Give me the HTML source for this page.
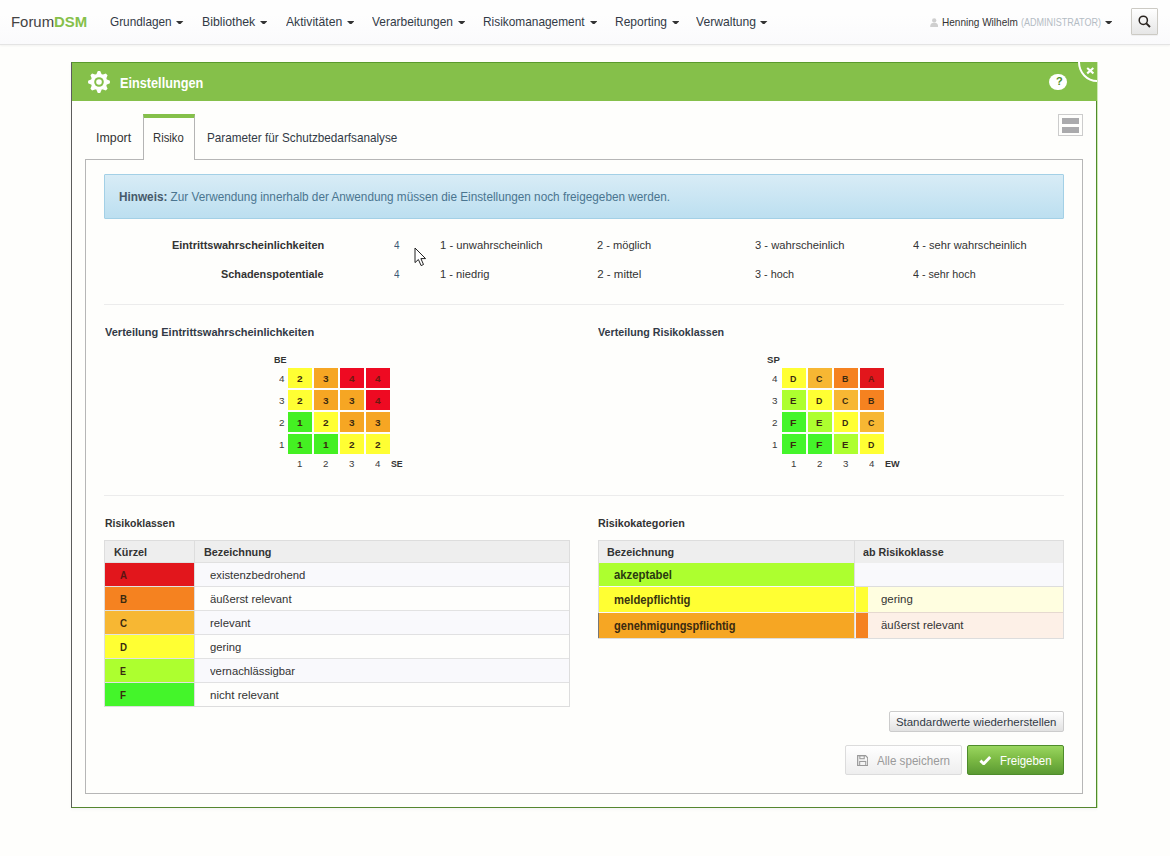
<!DOCTYPE html>
<html lang="de">
<head>
<meta charset="utf-8">
<title>ForumDSM - Einstellungen</title>
<style>
html,body{margin:0;padding:0;}
body{width:1170px;height:856px;overflow:hidden;background:#fefefc;font-family:'Liberation Sans',sans-serif;position:relative;}
#page{position:absolute;left:0;top:0;width:1170px;height:856px;overflow:hidden;background:#fefefc;}
.a{position:absolute;box-sizing:border-box;}
.t{position:absolute;white-space:nowrap;line-height:1;transform-origin:0 50%;font-family:'Liberation Sans',sans-serif;}
.c{position:absolute;}
.caret{position:absolute;width:0;height:0;border-left:3.8px solid transparent;border-right:3.8px solid transparent;border-top:4.2px solid #333;}
</style>
</head>
<body>
<div id="page">

<!-- NAVBAR -->
<div class="a" style="left:0;top:0;width:1170px;height:45px;background:linear-gradient(#fefefe 0%,#fefefe 33%,#fafafc 100%);border-bottom:1px solid #e4e4e4;box-shadow:0 1px 2px rgba(0,0,0,.05);"></div>
<svg class="a" style="left:176.4px;top:20.7px" width="7.4" height="3.8" viewBox="0 0 7.4 3.8"><path d="M0 0 H7.4 L3.7 3.8 Z" fill="#333"/></svg>
<svg class="a" style="left:260.0px;top:20.7px" width="7.4" height="3.8" viewBox="0 0 7.4 3.8"><path d="M0 0 H7.4 L3.7 3.8 Z" fill="#333"/></svg>
<svg class="a" style="left:346.6px;top:20.7px" width="7.4" height="3.8" viewBox="0 0 7.4 3.8"><path d="M0 0 H7.4 L3.7 3.8 Z" fill="#333"/></svg>
<svg class="a" style="left:457.6px;top:20.7px" width="7.4" height="3.8" viewBox="0 0 7.4 3.8"><path d="M0 0 H7.4 L3.7 3.8 Z" fill="#333"/></svg>
<svg class="a" style="left:589.6px;top:20.7px" width="7.4" height="3.8" viewBox="0 0 7.4 3.8"><path d="M0 0 H7.4 L3.7 3.8 Z" fill="#333"/></svg>
<svg class="a" style="left:671.6px;top:20.7px" width="7.4" height="3.8" viewBox="0 0 7.4 3.8"><path d="M0 0 H7.4 L3.7 3.8 Z" fill="#333"/></svg>
<svg class="a" style="left:760.4px;top:20.7px" width="7.4" height="3.8" viewBox="0 0 7.4 3.8"><path d="M0 0 H7.4 L3.7 3.8 Z" fill="#333"/></svg>
<svg class="a" style="left:1105.0px;top:20.7px" width="7.4" height="3.8" viewBox="0 0 7.4 3.8"><path d="M0 0 H7.4 L3.7 3.8 Z" fill="#333"/></svg>
<!-- user icon -->
<svg class="a" style="left:930px;top:18.3px" width="8.4" height="9" viewBox="0 0 14 15"><circle cx="7" cy="4" r="3.6" fill="#cfcfcf"/><path d="M0.3 15 C0.3 9.5 3 8 7 8 C11 8 13.7 9.5 13.7 15 Z" fill="#cfcfcf"/></svg>
<!-- search button -->
<div class="a" style="left:1131px;top:8px;width:27px;height:27px;border:1px solid #cccac4;border-radius:1px;background:linear-gradient(#ffffff,#e6e6e6);box-shadow:0 1px 1px rgba(0,0,0,.05);"></div>
<svg class="a" style="left:1138px;top:14.5px" width="13" height="13" viewBox="0 0 13 13"><circle cx="5.3" cy="5.3" r="4.1" fill="none" stroke="#2a2420" stroke-width="1.5"/><path d="M8.3 8.3 L12 12" stroke="#2a2420" stroke-width="1.9"/></svg>

<!-- PANEL -->
<div class="a" style="left:71px;top:62px;width:1026px;height:746px;border-top:1px solid #5a9a2c;border-left:1px solid #5c5c5c;border-right:1px solid #4f8a2b;border-bottom:1px solid #55862f;box-shadow:1px 0 0 rgba(150,215,90,.45),0 2px 2px rgba(120,120,160,.06);background:#fefefc;"></div>
<div class="a" style="left:71px;top:62px;width:1026px;height:38.5px;background:#85c04a;border-top:1px solid #5a9a2c;border-left:1px solid #5c5c5c;"></div>
<!-- gear -->
<svg class="a" style="left:88.4px;top:70.6px" width="22" height="22" viewBox="-11 -11 22 22">
<g fill="#fff">
<circle r="8.2"/>
<path d="M-2.7 -7.4 L-1.2 -10.9 L1.2 -10.9 L2.7 -7.4 Z" transform="rotate(0)"/>
<path d="M-2.7 -7.4 L-1.2 -10.9 L1.2 -10.9 L2.7 -7.4 Z" transform="rotate(45)"/>
<path d="M-2.7 -7.4 L-1.2 -10.9 L1.2 -10.9 L2.7 -7.4 Z" transform="rotate(90)"/>
<path d="M-2.7 -7.4 L-1.2 -10.9 L1.2 -10.9 L2.7 -7.4 Z" transform="rotate(135)"/>
<path d="M-2.7 -7.4 L-1.2 -10.9 L1.2 -10.9 L2.7 -7.4 Z" transform="rotate(180)"/>
<path d="M-2.7 -7.4 L-1.2 -10.9 L1.2 -10.9 L2.7 -7.4 Z" transform="rotate(225)"/>
<path d="M-2.7 -7.4 L-1.2 -10.9 L1.2 -10.9 L2.7 -7.4 Z" transform="rotate(270)"/>
<path d="M-2.7 -7.4 L-1.2 -10.9 L1.2 -10.9 L2.7 -7.4 Z" transform="rotate(315)"/>
</g>
<circle r="4.8" fill="#85c04a"/><circle r="2.8" fill="#fff"/>
</svg>
<!-- help -->
<div class="a" style="left:1049.3px;top:73.8px;width:17.8px;height:16.6px;border-radius:50%;background:#fff;"></div>
<span class="t" style="left:1055.9px;top:76px;font-size:11px;font-weight:700;color:#4f8f2a;">?</span>
<!-- close -->
<div class="a" style="left:1078px;top:42px;width:38px;height:40px;border-radius:50%;border:2.3px solid #fff;background:#85c04a;clip-path:inset(20px 19px 0 0);"></div>
<svg class="a" style="left:1085.6px;top:67.2px" width="8.6" height="7.4" viewBox="0 0 8.6 7.4"><path d="M1.2 1 L7.4 6.4 M7.4 1 L1.2 6.4" stroke="#fff" stroke-width="2.1" fill="none"/></svg>
<!-- page bg right of panel to hide -->

<!-- TABS -->
<div class="a" style="left:85.2px;top:158.6px;width:997.8px;height:635.4px;border:1px solid #b6b6b6;background:#fefefc;"></div>
<div class="a" style="left:143px;top:114px;width:52px;height:46px;border:1px solid #b4b4b4;border-bottom:none;border-top:4.8px solid #85c04a;background:#fefefc;"></div>
<!-- toggle button -->
<div class="a" style="left:1058px;top:113.8px;width:25px;height:22px;border:1px solid #ccc;background:#fefefc;"></div>
<div class="a" style="left:1062px;top:118px;width:17px;height:6.4px;background:#aaaaac;"></div>
<div class="a" style="left:1062px;top:126.6px;width:17px;height:6.4px;background:#aaaaac;"></div>

<!-- ALERT -->
<div class="a" style="left:104px;top:174.4px;width:960px;height:44.4px;border:1px solid #a3d0e6;border-radius:1px;background:linear-gradient(#d8ecf6,#bcdff0);"></div>

<!-- HR -->
<div class="a" style="left:104px;top:304.2px;width:960px;height:1px;background:#ececec;"></div>
<div class="a" style="left:104px;top:495px;width:960px;height:1px;background:#ececec;"></div>

<div class="c" style="left:287.9px;top:368.1px;width:24.2px;height:19.8px;background:#ffff33"></div><div class="c" style="left:313.9px;top:368.1px;width:24.2px;height:19.8px;background:#f6a623"></div><div class="c" style="left:339.9px;top:368.1px;width:24.2px;height:19.8px;background:#ee0a22"></div><div class="c" style="left:365.9px;top:368.1px;width:24.2px;height:19.8px;background:#ee0a22"></div><div class="c" style="left:287.9px;top:390.1px;width:24.2px;height:19.8px;background:#ffff33"></div><div class="c" style="left:313.9px;top:390.1px;width:24.2px;height:19.8px;background:#f6a623"></div><div class="c" style="left:339.9px;top:390.1px;width:24.2px;height:19.8px;background:#f6a623"></div><div class="c" style="left:365.9px;top:390.1px;width:24.2px;height:19.8px;background:#ee0a22"></div><div class="c" style="left:287.9px;top:412.1px;width:24.2px;height:19.8px;background:#44f022"></div><div class="c" style="left:313.9px;top:412.1px;width:24.2px;height:19.8px;background:#ffff33"></div><div class="c" style="left:339.9px;top:412.1px;width:24.2px;height:19.8px;background:#f6a623"></div><div class="c" style="left:365.9px;top:412.1px;width:24.2px;height:19.8px;background:#f6a623"></div><div class="c" style="left:287.9px;top:434.1px;width:24.2px;height:19.8px;background:#44f022"></div><div class="c" style="left:313.9px;top:434.1px;width:24.2px;height:19.8px;background:#44f022"></div><div class="c" style="left:339.9px;top:434.1px;width:24.2px;height:19.8px;background:#ffff33"></div><div class="c" style="left:365.9px;top:434.1px;width:24.2px;height:19.8px;background:#ffff33"></div><div class="c" style="left:781.5px;top:368.1px;width:24.6px;height:19.8px;background:#ffff33"></div><div class="c" style="left:807.5px;top:368.1px;width:24.6px;height:19.8px;background:#f7b733"></div><div class="c" style="left:833.5px;top:368.1px;width:24.6px;height:19.8px;background:#f58220"></div><div class="c" style="left:859.5px;top:368.1px;width:24.6px;height:19.8px;background:#e2161c"></div><div class="c" style="left:781.5px;top:390.1px;width:24.6px;height:19.8px;background:#adff2f"></div><div class="c" style="left:807.5px;top:390.1px;width:24.6px;height:19.8px;background:#ffff33"></div><div class="c" style="left:833.5px;top:390.1px;width:24.6px;height:19.8px;background:#f7b733"></div><div class="c" style="left:859.5px;top:390.1px;width:24.6px;height:19.8px;background:#f58220"></div><div class="c" style="left:781.5px;top:412.1px;width:24.6px;height:19.8px;background:#44f52a"></div><div class="c" style="left:807.5px;top:412.1px;width:24.6px;height:19.8px;background:#adff2f"></div><div class="c" style="left:833.5px;top:412.1px;width:24.6px;height:19.8px;background:#ffff33"></div><div class="c" style="left:859.5px;top:412.1px;width:24.6px;height:19.8px;background:#f7b733"></div><div class="c" style="left:781.5px;top:434.1px;width:24.6px;height:19.8px;background:#44f52a"></div><div class="c" style="left:807.5px;top:434.1px;width:24.6px;height:19.8px;background:#44f52a"></div><div class="c" style="left:833.5px;top:434.1px;width:24.6px;height:19.8px;background:#adff2f"></div><div class="c" style="left:859.5px;top:434.1px;width:24.6px;height:19.8px;background:#ffff33"></div>

<!-- TABLE 1 -->
<div class="a" style="left:104.4px;top:540.2px;width:466px;height:167px;border:1px solid #ddd;background:#fefefc;"></div>
<div class="a" style="left:105.4px;top:541.2px;width:464px;height:21.4px;background:#eeeeee;"></div>
<div class="a" style="left:194.4px;top:562.8px;width:374.8px;height:23.8px;background:#f9f9fc;"></div>
<div class="a" style="left:105.4px;top:563.0px;width:88.6px;height:23.3px;background:#e2161c;"></div>
<div class="a" style="left:105.4px;top:562.0px;width:464px;height:1px;background:rgba(221,221,221,.85);"></div>
<div class="a" style="left:105.4px;top:587.0px;width:88.6px;height:23.3px;background:#f58220;"></div>
<div class="a" style="left:105.4px;top:586.0px;width:464px;height:1px;background:rgba(221,221,221,.85);"></div>
<div class="a" style="left:194.4px;top:610.8px;width:374.8px;height:23.8px;background:#f9f9fc;"></div>
<div class="a" style="left:105.4px;top:611.0px;width:88.6px;height:23.3px;background:#f7b733;"></div>
<div class="a" style="left:105.4px;top:610.0px;width:464px;height:1px;background:rgba(221,221,221,.85);"></div>
<div class="a" style="left:105.4px;top:635.0px;width:88.6px;height:23.3px;background:#ffff33;"></div>
<div class="a" style="left:105.4px;top:634.0px;width:464px;height:1px;background:rgba(221,221,221,.85);"></div>
<div class="a" style="left:194.4px;top:658.8px;width:374.8px;height:23.8px;background:#f9f9fc;"></div>
<div class="a" style="left:105.4px;top:659.0px;width:88.6px;height:23.3px;background:#adff2f;"></div>
<div class="a" style="left:105.4px;top:658.0px;width:464px;height:1px;background:rgba(221,221,221,.85);"></div>
<div class="a" style="left:105.4px;top:683.0px;width:88.6px;height:23.3px;background:#44f52a;"></div>
<div class="a" style="left:105.4px;top:682.0px;width:464px;height:1px;background:rgba(221,221,221,.85);"></div>
<div class="a" style="left:193.8px;top:541.2px;width:1px;height:165.4px;background:#ddd;"></div>

<!-- TABLE 2 -->
<div class="a" style="left:598px;top:540.2px;width:466px;height:98.4px;border:1px solid #ddd;background:#f9f9fc;"></div>
<div class="a" style="left:599px;top:541.2px;width:464px;height:21.4px;background:#eeeeee;"></div>
<div class="a" style="left:854.3px;top:541.2px;width:1px;height:96.6px;background:#ddd;"></div>
<div class="a" style="left:599px;top:563.2px;width:255.3px;height:23.2px;background:#adff2f;"></div>
<div class="a" style="left:599px;top:587.4px;width:255.3px;height:24.8px;background:#ffff33;"></div>
<div class="a" style="left:599px;top:613.2px;width:255.3px;height:24.6px;background:#f6a623;"></div>
<div class="a" style="left:855.3px;top:586.2px;width:207.8px;height:1px;background:#ddd;"></div>
<div class="a" style="left:855.3px;top:612.3px;width:207.8px;height:1px;background:#e6d9d0;"></div>
<div class="a" style="left:855.3px;top:587.2px;width:207.8px;height:25.1px;background:#fffee0;"></div>
<div class="a" style="left:855.3px;top:613.3px;width:207.8px;height:24.5px;background:#fdf0e7;"></div>
<div class="a" style="left:856px;top:587.2px;width:12px;height:25.1px;background:#ffff33;"></div>
<div class="a" style="left:856px;top:613.3px;width:12px;height:24.5px;background:#f58220;"></div>

<div class="a" style="left:598px;top:613px;width:1px;height:25px;background:#777;"></div>

<!-- BUTTONS -->
<div class="a" style="left:889px;top:711.2px;width:175px;height:20.6px;border:1px solid #ccc;border-radius:2px;background:linear-gradient(#ffffff,#e2e2e2);"></div>
<div class="a" style="left:845px;top:745.4px;width:116.8px;height:29.4px;border:1px solid #dcdcdc;border-radius:2px;background:linear-gradient(#ffffff,#eeeeee);"></div>
<div class="a" style="left:967px;top:745.4px;width:97px;height:29.4px;border:1px solid #4e8c2b;border-radius:2px;background:linear-gradient(#9ad65f 0%,#7dbb45 45%,#5b9a33 100%);"></div>
<!-- floppy -->
<svg class="a" style="left:856.6px;top:754.8px" width="11.4" height="11.4" viewBox="0 0 12 12"><path d="M0.7 0.7 H9 L11.3 3 V11.3 H0.7 Z" fill="none" stroke="#9a9a9a" stroke-width="1.3"/><rect x="3" y="0.7" width="4.6" height="3.2" fill="none" stroke="#9a9a9a" stroke-width="1.1"/><rect x="2.8" y="6.8" width="6.4" height="4.4" fill="none" stroke="#9a9a9a" stroke-width="1.1"/></svg>
<!-- check -->
<svg class="a" style="left:979px;top:754.8px" width="12.6" height="10.6" viewBox="0 0 12.6 10.6"><path d="M1.4 5.6 L4.7 8.8 L11.2 2" fill="none" stroke="#fff" stroke-width="2.9"/></svg>

<!-- mouse cursor -->
<svg class="a" style="left:413.6px;top:246.8px" width="14" height="20" viewBox="0 0 14 20"><path d="M1 1 L1 15.6 L4.4 12.5 L7.1 18.6 L9.5 17.5 L6.9 11.6 L11.6 11.6 Z" fill="#fff" stroke="#222" stroke-width="1" stroke-linejoin="round"/></svg>

<span class="t" style="left:11.3px;top:15px;font-size:14.5px;color:#444;transform:scaleX(1.028)">Forum<b style='color:#86c04a'>DSM</b></span>
<span class="t" style="left:110.4px;top:15px;font-size:13px;color:#323a46;transform:scaleX(0.907)">Grundlagen</span>
<span class="t" style="left:202.4px;top:15px;font-size:13px;color:#323a46;transform:scaleX(0.945)">Bibliothek</span>
<span class="t" style="left:285.8px;top:15px;font-size:13px;color:#323a46;transform:scaleX(0.937)">Aktivitäten</span>
<span class="t" style="left:372.0px;top:15px;font-size:13px;color:#323a46;transform:scaleX(0.918)">Verarbeitungen</span>
<span class="t" style="left:483.0px;top:15px;font-size:13px;color:#323a46;transform:scaleX(0.913)">Risikomanagement</span>
<span class="t" style="left:614.7px;top:15px;font-size:13px;color:#323a46;transform:scaleX(0.922)">Reporting</span>
<span class="t" style="left:696.0px;top:15px;font-size:13px;color:#323a46;transform:scaleX(0.933)">Verwaltung</span>
<span class="t" style="left:942.2px;top:17px;font-size:10.5px;color:#333;transform:scaleX(0.955)">Henning Wilhelm</span>
<span class="t" style="left:1021.0px;top:17px;font-size:10.5px;color:#b4bcc4;transform:scaleX(0.861)">(ADMINISTRATOR)</span>
<span class="t" style="left:120.3px;top:76px;font-size:14px;font-weight:700;color:#fff;transform:scaleX(0.907)">Einstellungen</span>
<span class="t" style="left:95.9px;top:131px;font-size:13px;color:#333;transform:scaleX(0.953)">Import</span>
<span class="t" style="left:153.3px;top:131px;font-size:13px;color:#333;transform:scaleX(0.867)">Risiko</span>
<span class="t" style="left:207.0px;top:131px;font-size:13px;color:#323a46;transform:scaleX(0.902)">Parameter für Schutzbedarfsanalyse</span>
<span class="t" style="left:119.3px;top:191px;font-size:12px;color:#4a7590;transform:scaleX(0.980)"><b style='color:#46596a'>Hinweis:</b> Zur Verwendung innerhalb der Anwendung müssen die Einstellungen noch freigegeben werden.</span>
<span class="t" style="left:171.6px;top:240px;font-size:11.5px;font-weight:700;color:#333;transform:scaleX(0.953)">Eintrittswahrscheinlichkeiten</span>
<span class="t" style="left:221.2px;top:269px;font-size:11.5px;font-weight:700;color:#333;transform:scaleX(0.944)">Schadenspotentiale</span>
<span class="t" style="left:394.2px;top:240px;font-size:11.5px;color:#3d5875;transform:scaleX(0.859)">4</span>
<span class="t" style="left:394.2px;top:269px;font-size:11.5px;color:#3d5875;transform:scaleX(0.859)">4</span>
<span class="t" style="left:439.6px;top:240px;font-size:11.5px;color:#333;transform:scaleX(0.978)">1 - unwahrscheinlich</span>
<span class="t" style="left:597.2px;top:240px;font-size:11.5px;color:#333;transform:scaleX(0.965)">2 - möglich</span>
<span class="t" style="left:754.7px;top:240px;font-size:11.5px;color:#333;transform:scaleX(0.973)">3 - wahrscheinlich</span>
<span class="t" style="left:912.6px;top:240px;font-size:11.5px;color:#333;transform:scaleX(0.966)">4 - sehr wahrscheinlich</span>
<span class="t" style="left:439.6px;top:269px;font-size:11.5px;color:#333;transform:scaleX(0.968)">1 - niedrig</span>
<span class="t" style="left:597.2px;top:269px;font-size:11.5px;color:#333;transform:scaleX(1.000)">2 - mittel</span>
<span class="t" style="left:754.7px;top:269px;font-size:11.5px;color:#333;transform:scaleX(0.941)">3 - hoch</span>
<span class="t" style="left:912.6px;top:269px;font-size:11.5px;color:#333;transform:scaleX(0.933)">4 - sehr hoch</span>
<span class="t" style="left:104.5px;top:327px;font-size:11.5px;font-weight:700;color:#323a46;transform:scaleX(0.957)">Verteilung Eintrittswahrscheinlichkeiten</span>
<span class="t" style="left:597.8px;top:327px;font-size:11.5px;font-weight:700;color:#323a46;transform:scaleX(0.931)">Verteilung Risikoklassen</span>
<span class="t" style="left:104.7px;top:518px;font-size:11.5px;font-weight:700;color:#333;transform:scaleX(0.910)">Risikoklassen</span>
<span class="t" style="left:598.2px;top:518px;font-size:11.5px;font-weight:700;color:#333;transform:scaleX(0.936)">Risikokategorien</span>
<span class="t" style="left:297.2px;top:374px;font-size:9.5px;font-weight:700;color:#3a2a10;transform:scaleX(1.057)">2</span>
<span class="t" style="left:323.2px;top:374px;font-size:9.5px;font-weight:700;color:#3a2a10;transform:scaleX(1.057)">3</span>
<span class="t" style="left:349.2px;top:374px;font-size:9.5px;font-weight:700;color:#6a1a10;transform:scaleX(1.057)">4</span>
<span class="t" style="left:375.2px;top:374px;font-size:9.5px;font-weight:700;color:#6a1a10;transform:scaleX(1.057)">4</span>
<span class="t" style="left:278.5px;top:374px;font-size:9.5px;color:#3a3a3a;transform:scaleX(1.038)">4</span>
<span class="t" style="left:297.2px;top:396px;font-size:9.5px;font-weight:700;color:#3a2a10;transform:scaleX(1.057)">2</span>
<span class="t" style="left:323.2px;top:396px;font-size:9.5px;font-weight:700;color:#3a2a10;transform:scaleX(1.057)">3</span>
<span class="t" style="left:349.2px;top:396px;font-size:9.5px;font-weight:700;color:#3a2a10;transform:scaleX(1.057)">3</span>
<span class="t" style="left:375.2px;top:396px;font-size:9.5px;font-weight:700;color:#6a1a10;transform:scaleX(1.057)">4</span>
<span class="t" style="left:278.5px;top:396px;font-size:9.5px;color:#3a3a3a;transform:scaleX(1.038)">3</span>
<span class="t" style="left:297.2px;top:418px;font-size:9.5px;font-weight:700;color:#3a2a10;transform:scaleX(1.057)">1</span>
<span class="t" style="left:323.2px;top:418px;font-size:9.5px;font-weight:700;color:#3a2a10;transform:scaleX(1.057)">2</span>
<span class="t" style="left:349.2px;top:418px;font-size:9.5px;font-weight:700;color:#3a2a10;transform:scaleX(1.057)">3</span>
<span class="t" style="left:375.2px;top:418px;font-size:9.5px;font-weight:700;color:#3a2a10;transform:scaleX(1.057)">3</span>
<span class="t" style="left:278.5px;top:418px;font-size:9.5px;color:#3a3a3a;transform:scaleX(1.038)">2</span>
<span class="t" style="left:297.2px;top:440px;font-size:9.5px;font-weight:700;color:#3a2a10;transform:scaleX(1.057)">1</span>
<span class="t" style="left:323.2px;top:440px;font-size:9.5px;font-weight:700;color:#3a2a10;transform:scaleX(1.057)">1</span>
<span class="t" style="left:349.2px;top:440px;font-size:9.5px;font-weight:700;color:#3a2a10;transform:scaleX(1.057)">2</span>
<span class="t" style="left:375.2px;top:440px;font-size:9.5px;font-weight:700;color:#3a2a10;transform:scaleX(1.057)">2</span>
<span class="t" style="left:278.5px;top:440px;font-size:9.5px;color:#3a3a3a;transform:scaleX(1.038)">1</span>
<span class="t" style="left:297.3px;top:459px;font-size:9.5px;color:#3a3a3a;transform:scaleX(1.019)">1</span>
<span class="t" style="left:323.3px;top:459px;font-size:9.5px;color:#3a3a3a;transform:scaleX(1.019)">2</span>
<span class="t" style="left:349.3px;top:459px;font-size:9.5px;color:#3a3a3a;transform:scaleX(1.019)">3</span>
<span class="t" style="left:375.3px;top:459px;font-size:9.5px;color:#3a3a3a;transform:scaleX(1.019)">4</span>
<span class="t" style="left:274.1px;top:355px;font-size:9.5px;font-weight:700;color:#333;transform:scaleX(0.947)">BE</span>
<span class="t" style="left:391.3px;top:459px;font-size:9.5px;font-weight:700;color:#333;transform:scaleX(0.922)">SE</span>
<span class="t" style="left:790.4px;top:374px;font-size:9.5px;font-weight:700;color:#3a2a10;transform:scaleX(0.931)">D</span>
<span class="t" style="left:816.4px;top:374px;font-size:9.5px;font-weight:700;color:#3a2a10;transform:scaleX(0.931)">C</span>
<span class="t" style="left:842.4px;top:374px;font-size:9.5px;font-weight:700;color:#3a2a10;transform:scaleX(0.931)">B</span>
<span class="t" style="left:868.4px;top:374px;font-size:9.5px;font-weight:700;color:#6a1a10;transform:scaleX(0.931)">A</span>
<span class="t" style="left:772.0px;top:374px;font-size:9.5px;color:#3a3a3a;transform:scaleX(1.038)">4</span>
<span class="t" style="left:790.4px;top:396px;font-size:9.5px;font-weight:700;color:#3a2a10;transform:scaleX(1.009)">E</span>
<span class="t" style="left:816.4px;top:396px;font-size:9.5px;font-weight:700;color:#3a2a10;transform:scaleX(0.931)">D</span>
<span class="t" style="left:842.4px;top:396px;font-size:9.5px;font-weight:700;color:#3a2a10;transform:scaleX(0.931)">C</span>
<span class="t" style="left:868.4px;top:396px;font-size:9.5px;font-weight:700;color:#3a2a10;transform:scaleX(0.931)">B</span>
<span class="t" style="left:772.0px;top:396px;font-size:9.5px;color:#3a3a3a;transform:scaleX(1.038)">3</span>
<span class="t" style="left:790.4px;top:418px;font-size:9.5px;font-weight:700;color:#3a2a10;transform:scaleX(1.101)">F</span>
<span class="t" style="left:816.4px;top:418px;font-size:9.5px;font-weight:700;color:#3a2a10;transform:scaleX(1.009)">E</span>
<span class="t" style="left:842.4px;top:418px;font-size:9.5px;font-weight:700;color:#3a2a10;transform:scaleX(0.931)">D</span>
<span class="t" style="left:868.4px;top:418px;font-size:9.5px;font-weight:700;color:#3a2a10;transform:scaleX(0.931)">C</span>
<span class="t" style="left:772.0px;top:418px;font-size:9.5px;color:#3a3a3a;transform:scaleX(1.038)">2</span>
<span class="t" style="left:790.4px;top:440px;font-size:9.5px;font-weight:700;color:#3a2a10;transform:scaleX(1.101)">F</span>
<span class="t" style="left:816.4px;top:440px;font-size:9.5px;font-weight:700;color:#3a2a10;transform:scaleX(1.101)">F</span>
<span class="t" style="left:842.4px;top:440px;font-size:9.5px;font-weight:700;color:#3a2a10;transform:scaleX(1.009)">E</span>
<span class="t" style="left:868.4px;top:440px;font-size:9.5px;font-weight:700;color:#3a2a10;transform:scaleX(0.931)">D</span>
<span class="t" style="left:772.0px;top:440px;font-size:9.5px;color:#3a3a3a;transform:scaleX(1.038)">1</span>
<span class="t" style="left:790.9px;top:459px;font-size:9.5px;color:#3a3a3a;transform:scaleX(1.019)">1</span>
<span class="t" style="left:816.9px;top:459px;font-size:9.5px;color:#3a3a3a;transform:scaleX(1.019)">2</span>
<span class="t" style="left:842.9px;top:459px;font-size:9.5px;color:#3a3a3a;transform:scaleX(1.019)">3</span>
<span class="t" style="left:868.9px;top:459px;font-size:9.5px;color:#3a3a3a;transform:scaleX(1.019)">4</span>
<span class="t" style="left:767.2px;top:355px;font-size:9.5px;font-weight:700;color:#333;transform:scaleX(1.009)">SP</span>
<span class="t" style="left:884.8px;top:459px;font-size:9.5px;font-weight:700;color:#333;transform:scaleX(0.960)">EW</span>
<span class="t" style="left:113.8px;top:547px;font-size:11.5px;font-weight:700;color:#333;transform:scaleX(0.942)">Kürzel</span>
<span class="t" style="left:203.8px;top:547px;font-size:11.5px;font-weight:700;color:#333;transform:scaleX(0.942)">Bezeichnung</span>
<span class="t" style="left:119.9px;top:570px;font-size:11.5px;font-weight:700;color:#5a1512;transform:scaleX(0.842)">A</span>
<span class="t" style="left:210.0px;top:570px;font-size:11.5px;color:#333;transform:scaleX(0.981)">existenzbedrohend</span>
<span class="t" style="left:119.9px;top:594px;font-size:11.5px;font-weight:700;color:#3a2a10;transform:scaleX(0.842)">B</span>
<span class="t" style="left:210.0px;top:594px;font-size:11.5px;color:#333;transform:scaleX(0.981)">äußerst relevant</span>
<span class="t" style="left:119.9px;top:618px;font-size:11.5px;font-weight:700;color:#3a2a10;transform:scaleX(0.842)">C</span>
<span class="t" style="left:210.0px;top:618px;font-size:11.5px;color:#333;transform:scaleX(0.990)">relevant</span>
<span class="t" style="left:119.9px;top:642px;font-size:11.5px;font-weight:700;color:#3a2a10;transform:scaleX(0.842)">D</span>
<span class="t" style="left:210.0px;top:642px;font-size:11.5px;color:#333;transform:scaleX(0.976)">gering</span>
<span class="t" style="left:119.9px;top:666px;font-size:11.5px;font-weight:700;color:#3a2a10;transform:scaleX(0.782)">E</span>
<span class="t" style="left:210.0px;top:666px;font-size:11.5px;color:#333;transform:scaleX(0.978)">vernachlässigbar</span>
<span class="t" style="left:119.9px;top:690px;font-size:11.5px;font-weight:700;color:#3a2a10;transform:scaleX(0.853)">F</span>
<span class="t" style="left:210.0px;top:690px;font-size:11.5px;color:#333;transform:scaleX(1.006)">nicht relevant</span>
<span class="t" style="left:606.9px;top:547px;font-size:11.5px;font-weight:700;color:#333;transform:scaleX(0.939)">Bezeichnung</span>
<span class="t" style="left:862.6px;top:547px;font-size:11.5px;font-weight:700;color:#333;transform:scaleX(0.935)">ab Risikoklasse</span>
<span class="t" style="left:613.5px;top:569px;font-size:12px;font-weight:700;color:#2a3a10;transform:scaleX(0.945)">akzeptabel</span>
<span class="t" style="left:613.5px;top:594px;font-size:12px;font-weight:700;color:#3a3510;transform:scaleX(0.940)">meldepflichtig</span>
<span class="t" style="left:613.5px;top:620px;font-size:12px;font-weight:700;color:#3a2a10;transform:scaleX(0.920)">genehmigungspflichtig</span>
<span class="t" style="left:880.5px;top:594px;font-size:11.5px;color:#333;transform:scaleX(0.995)">gering</span>
<span class="t" style="left:880.5px;top:620px;font-size:11.5px;color:#333;transform:scaleX(0.993)">äußerst relevant</span>
<span class="t" style="left:896.3px;top:717px;font-size:11.5px;color:#323a46;transform:scaleX(0.992)">Standardwerte wiederherstellen</span>
<span class="t" style="left:877.1px;top:754px;font-size:13px;color:#9a9a9a;transform:scaleX(0.894)">Alle speichern</span>
<span class="t" style="left:1000.4px;top:754px;font-size:13px;color:#fff;transform:scaleX(0.881)">Freigeben</span>
</div>
</body>
</html>
